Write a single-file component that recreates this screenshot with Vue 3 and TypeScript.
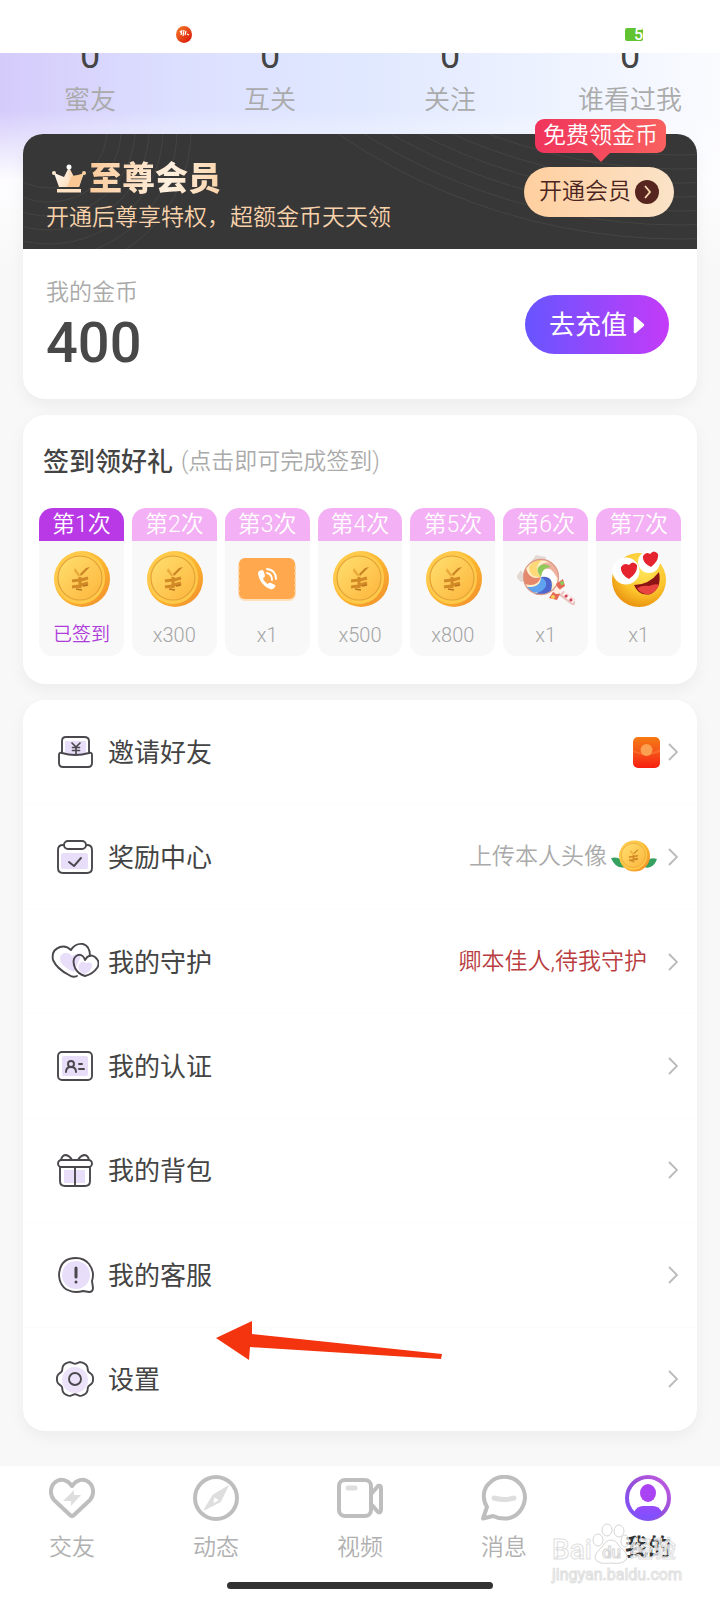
<script setup lang="ts">
interface Reward {
  day: number
  kind: 'coin' | 'ticket' | 'candy' | 'emoji'
  text: string
  done?: boolean
}
interface MenuItem {
  icon: string
  label: string
  note?: string
  extra?: 'envelope' | 'coin' | 'guard'
}

const stats = [
  { value: 0, label: '蜜友' },
  { value: 0, label: '互关' },
  { value: 0, label: '关注' },
  { value: 0, label: '谁看过我' },
]

const rewards: Reward[] = [
  { day: 1, kind: 'coin', text: '已签到', done: true },
  { day: 2, kind: 'coin', text: 'x300' },
  { day: 3, kind: 'ticket', text: 'x1' },
  { day: 4, kind: 'coin', text: 'x500' },
  { day: 5, kind: 'coin', text: 'x800' },
  { day: 6, kind: 'candy', text: 'x1' },
  { day: 7, kind: 'emoji', text: 'x1' },
]

const menu: MenuItem[] = [
  { icon: 'invite', label: '邀请好友', extra: 'envelope' },
  { icon: 'award', label: '奖励中心', note: '上传本人头像', extra: 'coin' },
  { icon: 'hearts', label: '我的守护', note: '卿本佳人,待我守护', extra: 'guard' },
  { icon: 'idcard', label: '我的认证' },
  { icon: 'gift', label: '我的背包' },
  { icon: 'service', label: '我的客服' },
  { icon: 'gear', label: '设置' },
]

const tabs = [
  { icon: 'heart', label: '交友' },
  { icon: 'compass', label: '动态' },
  { icon: 'video', label: '视频' },
  { icon: 'chat', label: '消息' },
  { icon: 'me', label: '我的', active: true },
]

const leftArcs = [58, 72, 86, 100, 114, 128, 142]
const rightArcs = [525, 539, 553, 567, 581, 595, 609]

// Outline of a gear with six soft teeth around (cx, cy).
function gearPath(cx: number, cy: number, radius: number, depth: number): string {
  const points: string[] = []
  for (let deg = 0; deg < 360; deg += 4) {
    const a = (deg * Math.PI) / 180
    const wave = Math.cos(6 * a)
    const r = radius + depth * (wave + 0.25 * Math.cos(12 * a + Math.PI))
    points.push(`${(cx + r * Math.cos(a)).toFixed(2)} ${(cy + r * Math.sin(a)).toFixed(2)}`)
  }
  return `M${points.join('L')}Z`
}
const gear = gearPath(24, 24, 17, 1.4)
</script>

<template>
  <div class="page">
    <svg class="defs" aria-hidden="true">
      <defs>
        <linearGradient id="coinEdge" x1="0" y1="0" x2="1" y2="1">
          <stop offset="0" stop-color="#ffd95a" /><stop offset="0.55" stop-color="#fbb32f" /><stop offset="1" stop-color="#f08a2c" />
        </linearGradient>
        <linearGradient id="coinFace" x1="0" y1="0" x2="1" y2="1">
          <stop offset="0" stop-color="#ffdf6e" /><stop offset="1" stop-color="#fdb53c" />
        </linearGradient>
        <radialGradient id="emojiFace" cx="0.6" cy="0.3" r="0.75">
          <stop offset="0" stop-color="#ffe85c" /><stop offset="0.6" stop-color="#fbc42c" /><stop offset="1" stop-color="#e88d0c" />
        </radialGradient>
        <linearGradient id="envelope" x1="0" y1="0" x2="0" y2="1">
          <stop offset="0" stop-color="#f77a12" /><stop offset="0.45" stop-color="#f4581a" /><stop offset="1" stop-color="#f81f10" />
        </linearGradient>
        <linearGradient id="crownLeft" x1="0" y1="0" x2="1" y2="1">
          <stop offset="0" stop-color="#fff" /><stop offset="1" stop-color="#fbdcb8" />
        </linearGradient>
        <linearGradient id="meRing" x1="1" y1="0" x2="0" y2="1">
          <stop offset="0" stop-color="#c45be0" /><stop offset="0.5" stop-color="#9650d8" /><stop offset="1" stop-color="#7a52ff" />
        </linearGradient>
        <linearGradient id="meBody" x1="0" y1="0" x2="0" y2="1">
          <stop offset="0" stop-color="#9a48fa" /><stop offset="1" stop-color="#7a52ff" />
        </linearGradient>
        <linearGradient id="recorder" x1="0" y1="0" x2="1" y2="1">
          <stop offset="0" stop-color="#f5812a" /><stop offset="1" stop-color="#d80f08" />
        </linearGradient>
        <symbol id="coin" viewBox="0 0 58 58">
          <circle cx="30" cy="29" r="28" fill="url(#coinEdge)" />
          <ellipse cx="28" cy="28" rx="25" ry="26" fill="#ffc94a" />
          <circle cx="28" cy="28" r="22" fill="url(#coinFace)" stroke="#e2a138" stroke-width="1.2" />
          <path d="M28 27v11M20 31l7-1M29 30l7-2M20 37l7-1M29 35l7-2" fill="none" stroke="#d18a26" stroke-width="3" />
          <path d="M23 18l5 7-1 2-5-6z" fill="#e8a83a" />
          <path d="M38 17l-9 9-1-2 6-6z" fill="#c98324" />
          <path d="M24 39l6 1M31 36l5-1" fill="none" stroke="#b97420" stroke-width="1.3" />
        </symbol>
      </defs>
    </svg>

    <header class="status">
      <svg class="rec" viewBox="0 0 16 17"><ellipse cx="8" cy="8.500" rx="8" ry="8.500" fill="url(#recorder)" /><path d="M4 5l2 3M6 4l-1 5M8 4l-1 6M10 5l-1 4M11 8l2 1" stroke="#fff" stroke-width="1.200" fill="none" /></svg>
      <span class="battery">5</span>
    </header>

    <section class="stats">
      <a v-for="s in stats" :key="s.label" href="#" class="stat">
        <span class="num">{{ s.value }}</span>
        <span class="stat-label">{{ s.label }}</span>
      </a>
    </section>

    <main class="content">
      <section class="wallet card">
        <div class="vip">
          <svg class="arcs" viewBox="0 0 674 115" preserveAspectRatio="none" aria-hidden="true">
            <g fill="none" stroke="#444542" stroke-width="1">
              <circle v-for="r in leftArcs" :key="'l' + r" cx="26" cy="-4" :r="r" />
              <circle v-for="r in rightArcs" :key="'r' + r" cx="657" cy="-504" :r="r" />
            </g>
          </svg>
          <div class="vip-text">
            <h2 class="vip-title">
              <svg class="crown" viewBox="0 0 36 30">
                <path d="M3 9l10 4 5-10v20H8z" fill="url(#crownLeft)" />
                <path d="M33 9l-10 4-5-10v20h10z" fill="#fbdcba" />
                <path d="M16 23l5-11 11-2-4 13z" fill="#f8c793" />
                <circle cx="18" cy="3" r="2.500" fill="#fff" /><circle cx="3" cy="9" r="2" fill="#ffe9d0" /><circle cx="33" cy="9" r="2" fill="#fbd3a2" />
                <path d="M6 25h24v3.500H6z" fill="#ffe3c4" />
              </svg>
              <span class="vip-name">至尊会员</span>
            </h2>
            <p class="vip-sub">开通后尊享特权，超额金币天天领</p>
          </div>
          <button type="button" class="open">
            <span class="bubble">免费领金币</span>
            开通会员
            <svg class="open-icon" viewBox="0 0 24 24"><circle cx="12" cy="12" r="12" fill="#56251f" /><path d="M10 6l5 6-5 6" fill="none" stroke="#fbd9b4" stroke-width="1.800" /></svg>
          </button>
        </div>
        <div class="balance">
          <div>
            <p class="balance-label">我的金币</p>
            <p class="balance-num">400</p>
          </div>
          <button type="button" class="recharge">
            去充值
            <svg class="play" viewBox="0 0 12 18"><path d="M2 2l8 7-8 7z" fill="#fff" stroke="#fff" stroke-width="2.500" stroke-linejoin="round" /></svg>
          </button>
        </div>
      </section>

      <section class="sign card">
        <h2 class="sign-title">签到领好礼 <small>(点击即可完成签到)</small></h2>
        <div class="days">
          <button v-for="r in rewards" :key="r.day" type="button" class="day" :class="{ done: r.done }">
            <span class="day-head">第{{ r.day }}次</span>
            <svg class="prize" viewBox="0 0 58 58">
              <use v-if="r.kind === 'coin'" href="#coin" />
              <g v-else-if="r.kind === 'ticket'">
                <rect x="0" y="9" width="58" height="42" rx="7" fill="#ffe0bd" />
                <rect x="1" y="8" width="56" height="41" rx="6" fill="#ffa84e" />
                <path d="M1 16v26M57 16v26" stroke="#ffcf9b" stroke-width="1.500" stroke-dasharray="3 3" />
                <path d="M21 21l3-1q1 0 2 2l1 4q0 1-2 2 1 4 5 6 1-2 3-1l4 2q1 1 0 2-2 3-5 2-10-4-12-15 0-2 1-3z" fill="#fff" />
                <path d="M29 23q5 1 5 7M29 19q9 1 9 10" fill="none" stroke="#fff" stroke-width="1.800" stroke-linecap="round" />
              </g>
              <g v-else-if="r.kind === 'candy'">
                <path d="M14 12L19 5l10 2-2 7zM4 20l-5 7 5 5 5-2z" fill="#e3d9d4" />
                <path d="M36 37l20 15" stroke="#e9c3be" stroke-width="6" stroke-linecap="round" />
                <path d="M39 37l18 15" stroke="#fff4ef" stroke-width="4" stroke-dasharray="3 2" />
                <circle cx="24" cy="27" r="18" fill="#ffeecb" />
                <path d="M24 27Q19 10 35 13 43 20 42 30 33 16 24 27" fill="#efb2a1" />
                <path d="M24 27Q24 17 33 19 42 25 39 37 33 26 24 27" fill="#fff" />
                <path d="M24 27Q38 25 34 41 27 46 18 44 31 38 24 27" fill="#4e67cf" />
                <path d="M24 27Q34 33 25 41 15 46 9 37 24 38 24 27" fill="#5fa2ef" />
                <path d="M24 27Q20 38 8 34 4 25 9 18 12 31 24 27" fill="#e4876a" />
                <path d="M24 27Q12 28 12 17 17 9 26 9 15 18 24 27" fill="#ffd978" />
                <path d="M24 27Q17 19 24 15 29 13 34 17 25 17 24 27" fill="#8fc95a" />
                <circle cx="24" cy="27" r="17.500" fill="none" stroke="#dd9b8d" stroke-width="1.300" />
                <path d="M39 34l7-5 2 7-6 4zM36 42l-4 6 8 2 3-6z" fill="#e56a55" />
                <circle cx="45" cy="33" r="2" fill="#8fc95a" /><circle cx="36" cy="47" r="2" fill="#f7cf57" /><circle cx="40" cy="41" r="3" fill="#fff0e2" />
                <circle cx="49" cy="46" r="1.500" fill="#d1455d" /><circle cx="54" cy="50" r="1.500" fill="#d1455d" />
              </g>
              <g v-else>
                <circle cx="29" cy="30" r="27" fill="url(#emojiFace)" />
                <circle cx="16" cy="21" r="13.500" fill="#fff" /><circle cx="39" cy="12" r="11" fill="#fff" />
                <path d="M19 29Q10 24 11 17q3-5 8-2 4-5 8 0 1 8-8 14zM41 17q-9-4-8-11 3-5 7-2 4-5 8 0 1 7-7 13z" fill="#e5232f" />
                <path d="M24 35q15 0 25-13 3 16-8 22-12 3-17-9z" fill="#8c1414" />
                <path d="M27 38q6-3 12-2 7-3 10-1-3 7-9 9-9 1-13-6z" fill="#e9443f" />
              </g>
            </svg>
            <span class="day-text">{{ r.text }}</span>
          </button>
        </div>
      </section>

      <nav class="menu card">
        <a v-for="m in menu" :key="m.icon" href="#" class="row">
          <svg class="row-icon" viewBox="0 0 48 48" fill="none" stroke="#4b484d" stroke-width="1.900" stroke-linecap="round" stroke-linejoin="round">
            <template v-if="m.icon === 'invite'">
              <path d="M14 13h21v13q-10 4-21 0z" fill="#e8defa" stroke="none" />
              <path d="M11 25V13q0-4 4-4h18q5 0 5 4v12" />
              <path d="M8 27q0-3 3-2 13 4 27 0 3-1 3 2v8q0 4-4 4H12q-4 0-4-4z" />
              <path d="M21 15l4 4 4-4M25 19v7M21.500 19.500h7M21.500 22.500h7" stroke-width="1.700" />
            </template>
            <template v-else-if="m.icon === 'award'">
              <rect x="10" y="20" width="27" height="16" rx="2" fill="#e8defa" stroke="none" />
              <path d="M13 12h-1q-5 0-5 5v18q0 5 5 5h24q5 0 5-5V17q0-5-5-5h-1" />
              <rect x="13" y="8" width="22" height="8" rx="4" />
              <path d="M18 29l5 4 7-8" />
            </template>
            <template v-else-if="m.icon === 'hearts'">
              <path d="M10 17q6-5 11 1 7-4 10-2l-8 18q-18-8-13-17zM28 26q3-4 7-1 7-2 6 4-3 6-8 7-8-4-5-10z" fill="#e8defa" stroke="none" />
              <path d="M26 38q-4 2-8-1Q6 31 2 22 0 12 9 9q6-2 11 3 4-7 12-6 7 2 7 12" />
              <path d="M34 22q4-7 10-3 6 5 2 11-4 6-12 8-7-2-10-8-4-10 3-13 5-1 7 5z" />
            </template>
            <template v-else-if="m.icon === 'idcard'">
              <rect x="11" y="14" width="26" height="20" rx="2" fill="#e8defa" stroke="none" />
              <rect x="7" y="10" width="34" height="28" rx="4" />
              <circle cx="20" cy="22" r="3" /><path d="M15 30q0-5 5-5 5 0 5 5M28 22h3M28 27h5" />
            </template>
            <template v-else-if="m.icon === 'gift'">
              <path d="M13 24h21v13H13z" fill="#e8defa" stroke="none" />
              <path d="M9 21v14q0 5 5 5h20q5 0 5-5V21M24 21v19" />
              <rect x="7" y="14" width="34" height="7" rx="3.500" fill="#fff" />
              <path d="M10 14q1-5 5-5 4 1 6 5M27 14q2-4 6-5 4 0 5 5" />
            </template>
            <template v-else-if="m.icon === 'service'">
              <circle cx="25" cy="24" r="14" fill="#e8defa" stroke="none" />
              <path d="M41 30q3-9-3-17-5-6-13-6Q9 7 8 24q1 16 17 17 4 0 7-1l6 1q4 0 4-4z" />
              <path d="M25 17v9M25 31v.1" stroke-width="3" />
            </template>
            <template v-else>
              <circle cx="24" cy="25" r="13" fill="#ece3fb" stroke="none" />
              <path :d="gear" /><circle cx="24" cy="24" r="6" />
            </template>
          </svg>
          <span class="row-label">{{ m.label }}</span>
          <span v-if="m.note" class="note" :class="m.extra">{{ m.note }}</span>
          <svg v-if="m.extra === 'envelope'" class="envelope" viewBox="0 0 27 31"><rect width="27" height="31" rx="5" fill="url(#envelope)" /><path d="M0 13q13 7 27-1v3q-14 6-27 0z" fill="#fa6a2a" /><circle cx="13.500" cy="13" r="6" fill="#fba050" /></svg>
          <svg v-if="m.extra === 'coin'" class="leaf-coin" viewBox="0 0 46 34"><path d="M0 18q10-3 15 9-10 3-15-9zM46 19q-10-3-13 8 9 3 13-8z" fill="#35a05f" /><use href="#coin" x="7" y="0" width="32" height="32" /></svg>
          <svg class="chevron" viewBox="0 0 10 18"><path d="M1 1l8 8-8 8" fill="none" stroke="#bababa" stroke-width="1.800" /></svg>
        </a>
        <svg class="arrow" viewBox="0 0 226 40" aria-hidden="true"><path d="M0 18L36 1v13l190 20-1 5L34 27l-1 13z" fill="#f4330f" /></svg>
      </nav>
    </main>

    <footer class="tabbar">
      <nav class="tabs">
        <a v-for="t in tabs" :key="t.icon" href="#" class="tab" :class="{ active: t.active }">
          <svg class="tab-icon" viewBox="0 0 46 46" fill="none" stroke="#bebebe" stroke-width="4" stroke-linejoin="round" stroke-linecap="round">
            <template v-if="t.icon === 'heart'">
              <path d="M23 11C18 4 12 4 9 5.500 1 9 0 19 5 25L21 40q2 2 4 0l16-15C46 19 45 9 37 5.500 34 4 28 4 23 11z" />
              <path d="M25 15L14 26h8v5l10-11h-7z" fill="#dedede" stroke="none" />
            </template>
            <template v-else-if="t.icon === 'compass'">
              <circle cx="23" cy="23" r="21" />
              <path fill-rule="evenodd" d="M35 11L20 20 11 35l16-8zM21 22l6 3-7 4z" fill="#dedede" stroke="#dedede" stroke-width="1" />
            </template>
            <template v-else-if="t.icon === 'video'">
              <rect x="2" y="5" width="32" height="36" rx="6" />
              <path d="M35 18l6-7q3-1 3 2v22q0 3-3 2l-6-7" />
              <path d="M11 13h7" stroke="#dedede" stroke-width="5" />
            </template>
            <template v-else-if="t.icon === 'chat'">
              <path d="M2 43.500L6 32C1 24 2 14 8 8.500 14 2 22 1 29 2.500 38 5 44 13 44 23 43 34 36 42 26 43.500 20 44 16 43 12 41z" />
              <path d="M13 23q10 3 20 0" stroke="#dedede" stroke-width="5" />
            </template>
            <template v-else>
              <circle cx="23" cy="23" r="21" stroke="url(#meRing)" />
              <ellipse cx="23" cy="18" rx="8" ry="9" fill="#a943f4" stroke="none" />
              <path d="M9 37q3-6 9-6h10q6 0 9 6-5 7-14 7-9 0-14-7z" fill="url(#meBody)" stroke="none" />
            </template>
          </svg>
          <span>{{ t.label }}</span>
        </a>
      </nav>
      <div class="home"></div>
      <div class="mark" aria-hidden="true">
        <div class="mark-top">
          <span>Bai</span>
          <svg class="paw" viewBox="0 0 38 42" fill="#fff" fill-opacity="0.6" stroke="#d6d6d6">
            <ellipse cx="6" cy="17" rx="5" ry="6" /><ellipse cx="15" cy="7" rx="5" ry="6" /><ellipse cx="27" cy="8" rx="5" ry="6" /><ellipse cx="33" cy="18" rx="4" ry="6" />
            <path d="M19 17q5 0 9 7 8 6 7 11-3 7-16 5-14 2-16-5 0-5 7-11 4-7 9-7z" />
            <text x="10" y="35" font-size="17">du</text>
          </svg>
          <span>经验</span>
        </div>
        <div class="mark-url">jingyan.baidu.com</div>
      </div>
    </footer>
  </div>
</template>

<style>
body {
  margin: 0;
  background: #f8f8f8;
}
</style>

<style scoped>
.page,
.page * {
  box-sizing: border-box;
}
.page {
  position: relative;
  display: flex;
  flex-direction: column;
  min-height: 100vh;
  font-family: Roboto, 'Noto Sans CJK SC', sans-serif;
  font-size: 23px;
  font-weight: 350;
  line-height: 30px;
  color: #444;
  background:
    linear-gradient(180deg, rgba(255, 255, 255, 0) 110px, #fdfdff 180px, #f8f8f8 270px),
    linear-gradient(90deg, #d5cbfb 0%, #dce0ff 26%, #e0e8ff 50%, #eef3ff 78%, #fafbff 100%);
}
.defs {
  position: absolute;
  width: 0;
  height: 0;
}
a {
  color: inherit;
  text-decoration: none;
}
button {
  border: 0;
  padding: 0;
  font: inherit;
  cursor: pointer;
}
h2,
p {
  margin: 0;
  font-weight: inherit;
}
svg {
  display: block;
  flex: none;
}
.status {
  display: flex;
  align-items: center;
  justify-content: space-between;
  height: 53px;
  padding: 16px 77px 0 176px;
  background: #fff;
}
.battery {
  width: 18px;
  height: 13px;
  border-radius: 2px;
  background: #62c331;
  color: #fff;
  font-size: 16px;
  font-weight: 500;
  line-height: 13px;
  text-align: right;
}
.rec {
  width: 16px;
  height: 17px;
}
.stats {
  display: grid;
  grid-template-columns: repeat(4, 1fr);
  padding-bottom: 16px;
}
.stat {
  display: flex;
  flex-direction: column;
  align-items: center;
  gap: 8px;
}
.num {
  display: flex;
  align-items: flex-end;
  height: 21px;
  overflow: hidden;
  font-size: 36px;
  font-weight: 400;
  line-height: 36px;
}
.stat-label {
  font-size: 26px;
  line-height: 36px;
  color: #aaa;
}
.content {
  display: flex;
  flex-direction: column;
  gap: 16px;
  padding: 0 23px 35px;
}
.card {
  border-radius: 22px;
  background: #fff;
  box-shadow: 0 6px 16px rgba(0, 0, 0, 0.05);
}
.vip {
  position: relative;
  display: flex;
  align-items: center;
  justify-content: space-between;
  min-height: 115px;
  padding: 0 23px;
  border-radius: 20px 20px 0 0;
  background: #373737;
}
.arcs {
  position: absolute;
  inset: 0;
  width: 100%;
  height: 100%;
  border-radius: 20px 20px 0 0;
}
.vip-text {
  position: relative;
  padding-top: 10px;
}
.vip-title {
  display: flex;
  align-items: center;
  gap: 2px;
  height: 36px;
  padding-left: 5px;
}
.crown {
  width: 36px;
  height: 30px;
}
.vip-name {
  font-size: 33px;
  font-weight: 900;
  line-height: 36px;
  color: transparent;
  background: linear-gradient(100deg, #fbc999, #fff0df 60%, #fbd3a8);
  background-clip: text;
}
.vip-sub {
  margin-top: 6px;
  color: #f8d2ab;
}
.open {
  position: relative;
  display: flex;
  align-items: center;
  gap: 4px;
  height: 50px;
  padding: 0 15px;
  border-radius: 25px;
  background: linear-gradient(90deg, #ffcf9f, #fbe3c8);
  color: #4b2420;
}
.open-icon {
  width: 24px;
  height: 24px;
}
.bubble {
  position: absolute;
  right: 8px;
  bottom: 64px;
  height: 34px;
  padding: 0 8px;
  border-radius: 9px;
  background: linear-gradient(90deg, #f0345c, #f8605f);
  color: #fff;
  line-height: 34px;
  white-space: nowrap;
}
.bubble::after {
  content: '';
  position: absolute;
  top: 100%;
  left: 50%;
  margin-left: -9px;
  border: 9px solid transparent;
  border-top-color: #f44b5d;
  border-bottom: 0;
}
.balance {
  display: flex;
  align-items: center;
  justify-content: space-between;
  padding: 29px 28px 28px 23px;
}
.balance-label {
  color: #aaa;
}
.balance-num {
  margin-top: 7px;
  font-size: 56px;
  font-weight: 500;
  line-height: 56px;
  color: #484848;
}
.recharge {
  display: flex;
  align-items: center;
  gap: 6px;
  height: 59px;
  padding: 0 24px;
  border-radius: 30px;
  background: linear-gradient(90deg, #6755ff, #c43bf8);
  color: #fff;
  font-size: 26px;
  font-weight: 400;
}
.play {
  width: 12px;
  height: 18px;
}
.sign {
  padding: 29px 16px 28px;
}
.sign-title {
  display: flex;
  align-items: center;
  gap: 8px;
  padding-left: 4px;
  font-size: 26px;
  font-weight: 500;
  line-height: 36px;
}
.sign-title small {
  font-size: 23px;
  font-weight: 350;
  color: #aaa;
}
.days {
  display: grid;
  grid-template-columns: repeat(7, 1fr);
  gap: 8px;
  margin-top: 28px;
}
.day {
  display: flex;
  flex-direction: column;
  align-items: center;
  padding-bottom: 8px;
  border-radius: 14px;
  background: #f8f8f8;
  overflow: hidden;
  color: #a5a5a5;
}
.day-head {
  width: 100%;
  background: #f4b0f4;
  color: #fff;
  line-height: 33px;
}
.done .day-head {
  background: #b939e6;
}
.prize {
  width: 58px;
  height: 58px;
  margin: 9px 0 14px;
}
.day-text {
  font-size: 20px;
  line-height: 26px;
}
.done .day-text {
  font-size: 19px;
  color: #ae3cdb;
}
.menu {
  position: relative;
  display: grid;
  grid-auto-rows: 1fr;
  min-height: 731px;
}
.row {
  display: flex;
  align-items: center;
  gap: 8px;
  padding: 0 19px 0 28px;
}
.row + .row {
  border-top: 1px solid #fcfcfc;
}
.row-icon {
  width: 48px;
  height: 48px;
}
.row-label {
  flex: 1;
  padding: 2px 0 0 1px;
  font-size: 26px;
  font-weight: 400;
  line-height: 36px;
}
.note {
  margin-right: -4px;
  color: #aaa;
}
.note.guard {
  margin-right: 13px;
  color: #b93c40;
}
.envelope {
  width: 27px;
  height: 31px;
}
.leaf-coin {
  width: 46px;
  height: 34px;
  margin-right: 3px;
}
.chevron {
  width: 10px;
  height: 18px;
}
.arrow {
  position: absolute;
  left: 193px;
  top: 620px;
  width: 226px;
  height: 40px;
}
.tabbar {
  position: relative;
  margin-top: auto;
  padding: 9px 0 11px;
  background: #fff;
}
.tabs {
  display: grid;
  grid-template-columns: repeat(5, 1fr);
}
.tab {
  display: flex;
  flex-direction: column;
  align-items: center;
  gap: 12px;
  color: #b0b0b0;
}
.tab.active {
  color: #333;
  font-weight: 700;
}
.tab-icon {
  width: 46px;
  height: 46px;
}
.home {
  width: 37%;
  height: 7px;
  margin: 19px auto 0;
  border-radius: 4px;
  background: #333;
}
.mark {
  position: absolute;
  right: 38px;
  bottom: 15px;
  width: 130px;
  color: rgba(255, 255, 255, 0.6);
  -webkit-text-stroke: 1px #e0e0e0;
}
.mark-top {
  display: flex;
  align-items: flex-end;
  font-size: 28px;
  font-weight: 500;
  line-height: 30px;
}
.mark-top span:last-child {
  font-size: 23px;
}
.paw {
  width: 38px;
  height: 42px;
}
.mark-url {
  font-size: 16px;
  font-weight: 400;
  line-height: 20px;
}
</style>
